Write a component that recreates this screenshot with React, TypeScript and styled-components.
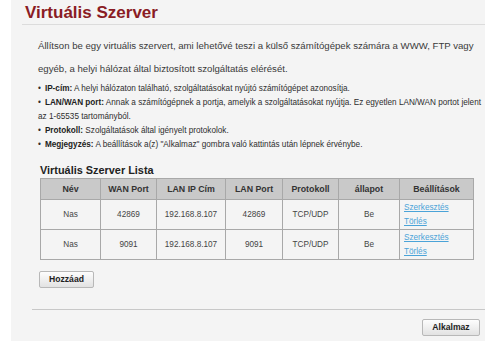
import React from 'react'
import styled, { createGlobalStyle } from 'styled-components'

const GlobalStyle = createGlobalStyle`
  html, body {
    margin: 0;
    padding: 0;
    background: #ffffff;
    font-family: 'Liberation Sans', Arial, sans-serif;
  }
`

interface ServerRow {
  name: string
  wanPort: string
  lanIp: string
  lanPort: string
  protocol: string
  status: string
}

const rows: ServerRow[] = [
  { name: 'Nas', wanPort: '42869', lanIp: '192.168.8.107', lanPort: '42869', protocol: 'TCP/UDP', status: 'Be' },
  { name: 'Nas', wanPort: '9091', lanIp: '192.168.8.107', lanPort: '9091', protocol: 'TCP/UDP', status: 'Be' },
]

const columns = [
  { label: 'Név', width: 59 },
  { label: 'WAN Port', width: 55 },
  { label: 'LAN IP Cím', width: 68 },
  { label: 'LAN Port', width: 56 },
  { label: 'Protokoll', width: 55 },
  { label: 'állapot', width: 60 },
  { label: 'Beállítások', width: 73 },
]

const Page = styled.div`
  width: 500px;
  height: 343px;
  padding-left: 11px;
  box-sizing: border-box;
  overflow: hidden;
`

const Panel = styled.div`
  width: 474px;
  height: 341px;
  background: #f4f4f4;
  display: flex;
  flex-direction: column;
`

const Title = styled.h1`
  margin: 0 0 0 11px;
  padding: 3px 0 0 3px;
  height: 21px;
  font-size: 17px;
  line-height: 20px;
  font-weight: bold;
  color: #8a1c24;
  border-bottom: 1px solid #dcdcdc;
`

const Content = styled.div`
  padding: 0 0 0 27px;
  display: flex;
  flex-direction: column;
`

const Intro = styled.p`
  margin: 9px 0 0;
  width: 445px;
  font-size: 9.6px;
  line-height: 23px;
  color: #3a3a3a;
`

const HelpList = styled.ul`
  margin: 2px 0 0;
  padding: 0;
  list-style: none;
  width: 449px;
  font-size: 8.2px;
  line-height: 14px;
  color: #2e2e2e;
`

const HelpItem = styled.li`
  &::before {
    content: '•';
    margin-right: 4px;
  }
  b {
    color: #222;
  }
`

const SectionTitle = styled.h2`
  margin: 11px 0 0 2px;
  font-size: 10.9px;
  line-height: 14px;
  font-weight: bold;
  color: #222;
`

const Table = styled.table`
  margin: 1px 0 0 2px;
  border-collapse: collapse;
  table-layout: fixed;
  width: 427px;
  border: 1px solid #a0a0a0;
  font-size: 8.2px;
`

const HeadCell = styled.th<{ $w: number }>`
  width: ${({ $w }) => $w}px;
  height: 20px;
  padding: 0;
  background: #c9c9c9;
  border: 1px solid #a8a8a8;
  color: #333;
  font-size: 8.8px;
  font-weight: bold;
  text-align: center;
`

const Cell = styled.td`
  height: 29px;
  padding: 0;
  background: #f4f4f4;
  border: 1px solid #a8a8a8;
  color: #444;
  text-align: center;
`

const ActionCell = styled(Cell)`
  text-align: left;
  padding-left: 4px;
  line-height: 14px;
  vertical-align: middle;
`

const Link = styled.a`
  display: block;
  color: #4aa3d8;
  text-decoration: underline;
  font-size: 8.2px;
`

const Button = styled.button<{ $w: number }>`
  width: ${({ $w }) => $w}px;
  height: 17px;
  padding: 0;
  font-family: 'Liberation Sans', Arial, sans-serif;
  font-size: 8.6px;
  font-weight: bold;
  color: #222;
  background: linear-gradient(#fdfdfd, #e2e2e2);
  border: 1px solid #b8b8b8;
  border-radius: 2px;
`

const AddRow = styled.div`
  margin-top: 8px;
  padding-left: 1px;
`

const Footer = styled.div`
  margin: 21px 0 0 21px;
  border-top: 1px solid #c8c8c8;
  padding: 9px 5px 0 0;
  display: flex;
  justify-content: flex-end;
`

const App: React.FC = () => (
  <Page>
    <GlobalStyle />
    <Panel>
      <Title>Virtuális Szerver</Title>
      <Content>
        <Intro>
          Állítson be egy virtuális szervert, ami lehetővé teszi a külső számítógépek számára a WWW, FTP vagy
          egyéb, a helyi hálózat által biztosított szolgáltatás elérését.
        </Intro>
        <HelpList>
          <HelpItem>
            <b>IP-cím:</b> A helyi hálózaton található, szolgáltatásokat nyújtó számítógépet azonosítja.
          </HelpItem>
          <HelpItem>
            <b>LAN/WAN port:</b> Annak a számítógépnek a portja, amelyik a szolgáltatásokat nyújtja. Ez egyetlen
            LAN/WAN portot jelent az 1-65535 tartományból.
          </HelpItem>
          <HelpItem>
            <b>Protokoll:</b> Szolgáltatások által igényelt protokolok.
          </HelpItem>
          <HelpItem>
            <b>Megjegyzés:</b> A beállítások a(z) "Alkalmaz" gombra való kattintás után lépnek érvénybe.
          </HelpItem>
        </HelpList>
        <SectionTitle>Virtuális Szerver Lista</SectionTitle>
        <Table>
          <thead>
            <tr>
              {columns.map(c => (
                <HeadCell key={c.label} $w={c.width}>
                  {c.label}
                </HeadCell>
              ))}
            </tr>
          </thead>
          <tbody>
            {rows.map((r, i) => (
              <tr key={i}>
                <Cell>{r.name}</Cell>
                <Cell>{r.wanPort}</Cell>
                <Cell>{r.lanIp}</Cell>
                <Cell>{r.lanPort}</Cell>
                <Cell>{r.protocol}</Cell>
                <Cell>{r.status}</Cell>
                <ActionCell>
                  <Link href="#">Szerkesztés</Link>
                  <Link href="#">Törlés</Link>
                </ActionCell>
              </tr>
            ))}
          </tbody>
        </Table>
        <AddRow>
          <Button $w={55}>Hozzáad</Button>
        </AddRow>
      </Content>
      <Footer>
        <Button $w={58}>Alkalmaz</Button>
      </Footer>
    </Panel>
  </Page>
)

export default App
